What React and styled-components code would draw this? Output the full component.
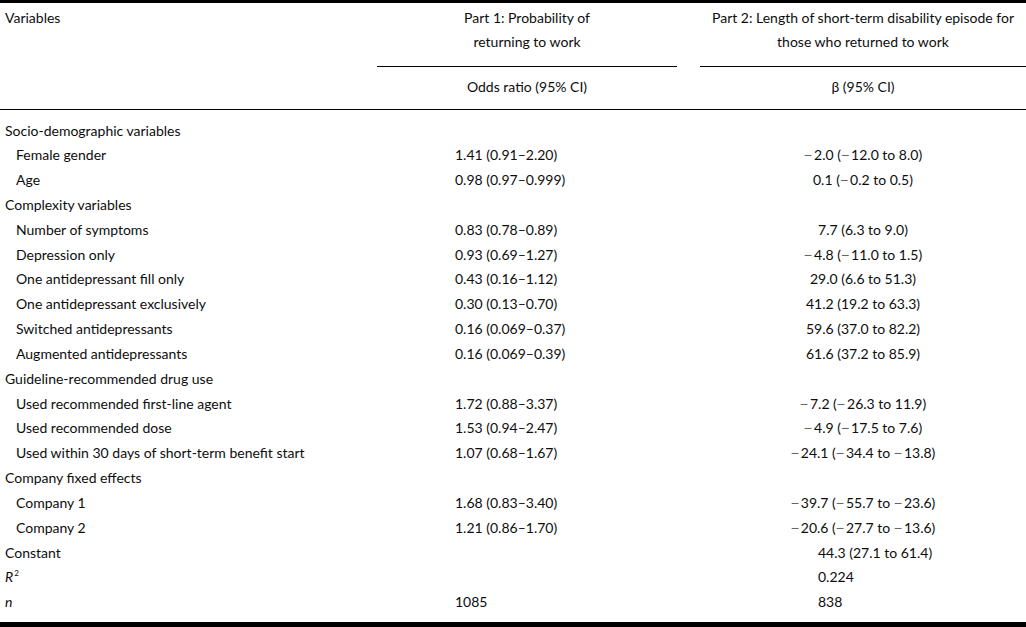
import React from "react";
import styled, { createGlobalStyle } from "styled-components";

const GlobalStyle = createGlobalStyle`
  html, body {
    margin: 0;
    padding: 0;
    background: #fff;
  }
  body {
    font-family: Lato, "Open Sans", sans-serif;
    font-size: 14px;
    color: #0d0d0d;
  }
`;

const rows = [
  { kind: "group", label: "Socio-demographic variables" },
  { label: "Female gender", or: "1.41 (0.91–2.20)", beta: ["-2.0 (", "-12.0 to 8.0)"] },
  { label: "Age", or: "0.98 (0.97–0.999)", beta: ["0.1 (", "-0.2 to 0.5)"] },
  { kind: "group", label: "Complexity variables" },
  { label: "Number of symptoms", or: "0.83 (0.78–0.89)", beta: ["7.7 (6.3 to 9.0)"] },
  { label: "Depression only", or: "0.93 (0.69–1.27)", beta: ["-4.8 (", "-11.0 to 1.5)"] },
  { label: "One antidepressant fill only", or: "0.43 (0.16–1.12)", beta: ["29.0 (6.6 to 51.3)"] },
  { label: "One antidepressant exclusively", or: "0.30 (0.13–0.70)", beta: ["41.2 (19.2 to 63.3)"] },
  { label: "Switched antidepressants", or: "0.16 (0.069–0.37)", beta: ["59.6 (37.0 to 82.2)"] },
  { label: "Augmented antidepressants", or: "0.16 (0.069–0.39)", beta: ["61.6 (37.2 to 85.9)"] },
  { kind: "group", label: "Guideline-recommended drug use" },
  { label: "Used recommended first-line agent", or: "1.72 (0.88–3.37)", beta: ["-7.2 (", "-26.3 to 11.9)"] },
  { label: "Used recommended dose", or: "1.53 (0.94–2.47)", beta: ["-4.9 (", "-17.5 to 7.6)"] },
  {
    label: "Used within 30 days of short-term benefit start",
    or: "1.07 (0.68–1.67)",
    beta: ["-24.1 (", "-34.4 to ", "-13.8)"],
  },
  { kind: "group", label: "Company fixed effects" },
  { label: "Company 1", or: "1.68 (0.83–3.40)", beta: ["-39.7 (", "-55.7 to ", "-23.6)"] },
  { label: "Company 2", or: "1.21 (0.86–1.70)", beta: ["-20.6 (", "-27.7 to ", "-13.6)"] },
  { kind: "group", label: "Constant", or: "", beta: ["44.3 (27.1 to 61.4)"], left: true },
  { kind: "group", label: "R", sup: "2", italic: true, or: "", beta: ["0.224"], left: true },
  { kind: "group", label: "n", italic: true, or: "1085", beta: ["838"], left: true },
];

const Table = () => {
  return (
    <StyledTable>
      <Head>
        <HeadCell>Variables</HeadCell>
        <PartHeading>
          Part 1: Probability of
          <br />
          returning to work
        </PartHeading>
        <span />
        <PartHeading>
          Part 2: Length of short-term disability episode for
          <br />
          those who returned to work
        </PartHeading>
        <span />
        <SubHeading>Odds ratio (95% CI)</SubHeading>
        <span />
        <SubHeading>β (95% CI)</SubHeading>
      </Head>
      <Body>
        {rows.map((row, index) => (
          <Row key={index}>
            <Label $indent={row.kind !== "group"} $italic={row.italic}>
              {row.label}
              {row.sup && <Sup>{row.sup}</Sup>}
            </Label>
            <OddsValue>{row.or}</OddsValue>
            <span />
            <BetaValue $left={row.left}>
              {row.beta &&
                row.beta.map((part, i) =>
                  part.startsWith("-") ? (
                    <React.Fragment key={i}>
                      <Minus>−</Minus>
                      {part.slice(1)}
                    </React.Fragment>
                  ) : (
                    <React.Fragment key={i}>{part}</React.Fragment>
                  )
                )}
            </BetaValue>
          </Row>
        ))}
      </Body>
    </StyledTable>
  );
};

export default function App() {
  return (
    <>
      <GlobalStyle />
      <Table />
    </>
  );
}

const columns = "377px 300px 23px 1fr";

const StyledTable = styled.div`
  width: 1026px;
  border-top: 3px solid #000;
  border-bottom: 6px solid #000;
`;

const Head = styled.div`
  display: grid;
  grid-template-columns: ${columns};
  border-bottom: 1px solid #000;
`;

const HeadCell = styled.div`
  padding: 3px 0 0 5px;
  line-height: 24px;
`;

const PartHeading = styled.div`
  padding: 3px 0 12px;
  line-height: 24px;
  text-align: center;
  border-bottom: 1px solid #000;
`;

const SubHeading = styled.div`
  padding: 8px 0 10px;
  line-height: 24px;
  text-align: center;
`;

const Body = styled.div`
  padding: 7.6px 0;
`;

const Row = styled.div`
  display: grid;
  grid-template-columns: ${columns};
  height: 24.84px;
  align-items: center;
  white-space: nowrap;
`;

const Label = styled.div`
  padding-left: ${(p) => (p.$indent ? "16px" : "5px")};
  font-style: ${(p) => (p.$italic ? "italic" : "normal")};
`;

const Sup = styled.sup`
  font-size: 8px;
  font-style: normal;
  vertical-align: 6px;
  margin-left: 1px;
`;

const OddsValue = styled.div`
  padding-left: 78px;
`;

const BetaValue = styled.div`
  text-align: ${(p) => (p.$left ? "left" : "center")};
  padding-left: ${(p) => (p.$left ? "118px" : "0")};
`;

const Minus = styled.span`
  font-family: "Liberation Sans", sans-serif;
  color: #666;
  margin-right: 2px;
`;
